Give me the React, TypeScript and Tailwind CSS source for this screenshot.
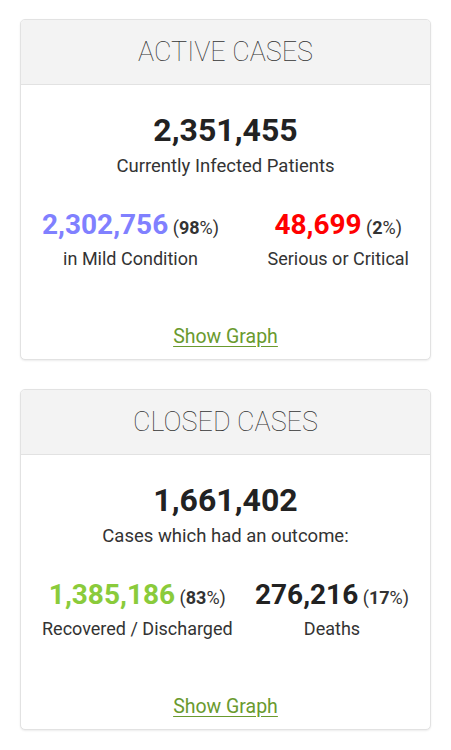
import React from "react";

const font = { fontFamily: "Roboto, 'Noto Sans', sans-serif" };

function Stat({
  value,
  pct,
  color,
  label,
}: {
  value: string;
  pct: string;
  color: string;
  label: string;
}) {
  return (
    <div className="flex flex-col items-center">
      <div className="leading-[34px] whitespace-nowrap">
        <span className={`text-[28px] font-bold ${color}`}>{value}</span>
        <span className="text-[18px] text-[#333]">
          {" "}(<span className="font-bold">{pct}</span>%)
        </span>
      </div>
      <div className="-mt-[1px] text-[18px] leading-[27px] text-[#333] whitespace-nowrap">
        {label}
      </div>
    </div>
  );
}

function Card({
  title,
  total,
  subtitle,
  left,
  right,
}: {
  title: string;
  total: string;
  subtitle: string;
  left: React.ReactNode;
  right: React.ReactNode;
}) {
  return (
    <div className="h-[341px] rounded-[5px] border border-[#e2e2e2] bg-white shadow-[0_1px_2px_rgba(0,0,0,0.08)] overflow-hidden flex flex-col">
      <div className="h-[65px] shrink-0 border-b border-[#e2e2e2] bg-[#f3f3f3] flex items-center justify-center">
        <span className="text-[27px] font-thin text-[#333]">{title}</span>
      </div>
      <div className="flex flex-col items-center pt-[26px]">
        <div className="text-[32px] font-bold leading-[38px] text-[#222]">{total}</div>
        <div className="mt-[4px] text-[18.5px] leading-[27px] text-[#333]">{subtitle}</div>
        <div className="mt-[28px] w-full px-[21px] flex justify-between">
          {left}
          {right}
        </div>
        <a
          href="#"
          className="mt-[51px] text-[19.5px] leading-[27px] text-[#6a9a2e] underline underline-offset-[3px]"
        >
          Show Graph
        </a>
      </div>
    </div>
  );
}

export default function App() {
  return (
    <div style={font} className="min-h-[750px] w-[451px] bg-white pt-[19px] pl-[20px] pr-[20px] flex flex-col gap-[29px]">
      <Card
        title="ACTIVE CASES"
        total="2,351,455"
        subtitle="Currently Infected Patients"
        left={<Stat value="2,302,756" pct="98" color="text-[#8080ff]" label="in Mild Condition" />}
        right={<Stat value="48,699" pct="2" color="text-[#ff0000]" label="Serious or Critical" />}
      />
      <Card
        title="CLOSED CASES"
        total="1,661,402"
        subtitle="Cases which had an outcome:"
        left={<Stat value="1,385,186" pct="83" color="text-[#8acb3b]" label="Recovered / Discharged" />}
        right={<Stat value="276,216" pct="17" color="text-[#222]" label="Deaths" />}
      />
    </div>
  );
}
